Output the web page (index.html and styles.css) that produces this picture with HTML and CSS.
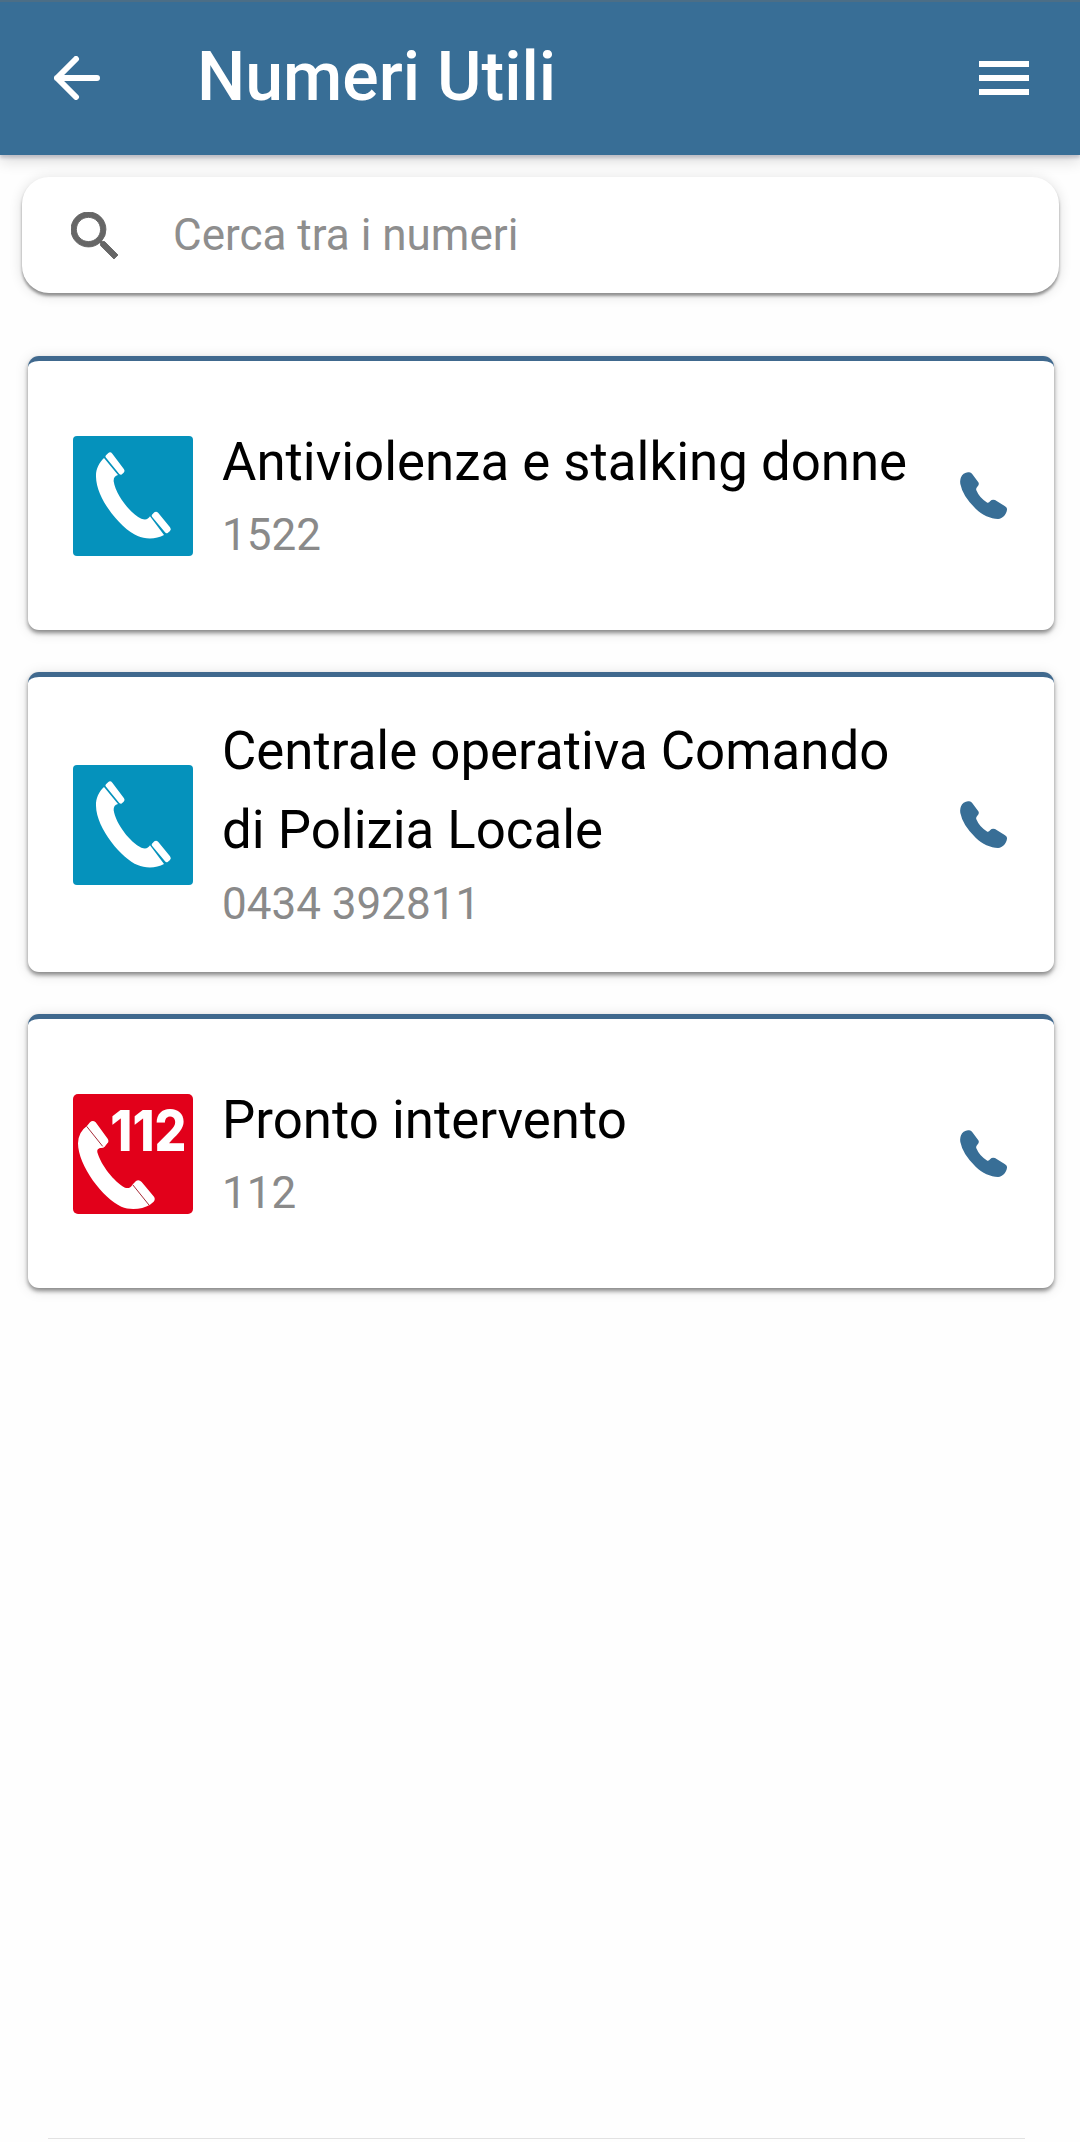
FILE: index.html
```html
<!DOCTYPE html>
<html lang="it">
<head>
<meta charset="utf-8">
<title>Numeri Utili</title>
<link rel="stylesheet" href="styles.css">
</head>
<body>
<header class="toolbar">
  <svg class="back" viewBox="0 0 46 44"><path d="M43 22H3M22 3L3 22l19 19"/></svg>
  <h1 class="title">Numeri Utili</h1>
  <div class="menu"><span></span><span></span><span></span></div>
</header>
<main class="content">
  <div class="search">
    <svg class="search-icon" viewBox="3 3 17.5 17.5"><path d="M15.5 14h-.79l-.28-.27A6.47 6.47 0 0 0 16 9.5 6.5 6.5 0 1 0 9.5 16c1.61 0 3.09-.59 4.23-1.57l.27.28v.79l5 4.99L20.49 19l-4.99-5zm-6 0C7.01 14 5 11.99 5 9.5S7.01 5 9.5 5 14 7.01 14 9.5 11.99 14 9.5 14z"/></svg>
    <span class="placeholder">Cerca tra i numeri</span>
  </div>
  <section class="cards">
    <article class="card">
      <svg class="badge" viewBox="39 48 360 360"><rect class="teal" x="39" y="48" width="360" height="360" rx="12"/><g class="white"><path d="M132 114L174 165Q160 168 161 184C167 225 212 282 244 296Q262 303 270 289L312 345C290 358 255 358 233 348C187 330 109 239 108 170C107 148 117 128 132 114Z"/><path d="M138 106L145 99Q151 94 157 101L192 148Q196 153 191 158L184 164Q179 165 176 160L137 112Q135 109 138 106Z"/><path d="M276 284L283 277Q289 273 295 279L330 322Q335 328 330 333L323 339Q318 341 315 337L276 290Q274 287 276 284Z"/></g></svg>
      <div class="info"><h2>Antiviolenza e stalking donne</h2><p>1522</p></div>
      <svg class="call" viewBox="90 68 141 141"><path d="M101 73Q108 70 114 69Q122 67 126 73L145 99Q149 106 142 112Q137 117 139 123Q149 147 172 160Q176 162 181 155Q186 149 195 152L224 170Q232 175 231 181C229 195 219 207 204 209C182 208 156 197 137 178Q98 141 91 104Q88 84 101 73Z"/></svg>
    </article>
    <article class="card tall">
      <svg class="badge" viewBox="39 48 360 360"><rect class="teal" x="39" y="48" width="360" height="360" rx="12"/><g class="white"><path d="M132 114L174 165Q160 168 161 184C167 225 212 282 244 296Q262 303 270 289L312 345C290 358 255 358 233 348C187 330 109 239 108 170C107 148 117 128 132 114Z"/><path d="M138 106L145 99Q151 94 157 101L192 148Q196 153 191 158L184 164Q179 165 176 160L137 112Q135 109 138 106Z"/><path d="M276 284L283 277Q289 273 295 279L330 322Q335 328 330 333L323 339Q318 341 315 337L276 290Q274 287 276 284Z"/></g></svg>
      <div class="info"><h2>Centrale operativa Comando<br>di Polizia Locale</h2><p>0434 392811</p></div>
      <svg class="call" viewBox="90 68 141 141"><path d="M101 73Q108 70 114 69Q122 67 126 73L145 99Q149 106 142 112Q137 117 139 123Q149 147 172 160Q176 162 181 155Q186 149 195 152L224 170Q232 175 231 181C229 195 219 207 204 209C182 208 156 197 137 178Q98 141 91 104Q88 84 101 73Z"/></svg>
    </article>
    <article class="card">
      <svg class="badge" viewBox="39 42 360 360"><rect class="red" x="39" y="42" width="360" height="360" rx="15"/><path class="white" d="M80 139L90 127Q98 119 107 127L143 176Q148 184 142 190L134 200Q130 205 120 204Q110 207 112 217C122 254 162 306 195 323Q210 328 217 314L228 303Q237 298 245 306L282 350Q287 358 281 365L270 374C247 388 210 391 184 380C130 357 54 257 54 190Q55 156 80 139Z"/><path class="seam" d="M80 139L128 199M218 314L267 375"/><text class="digits" x="151" y="214" textLength="228" lengthAdjust="spacingAndGlyphs">112</text></svg>
      <div class="info"><h2>Pronto intervento</h2><p>112</p></div>
      <svg class="call" viewBox="90 68 141 141"><path d="M101 73Q108 70 114 69Q122 67 126 73L145 99Q149 106 142 112Q137 117 139 123Q149 147 172 160Q176 162 181 155Q186 149 195 152L224 170Q232 175 231 181C229 195 219 207 204 209C182 208 156 197 137 178Q98 141 91 104Q88 84 101 73Z"/></svg>
    </article>
  </section>
</main>
<hr class="bottom-line">
</body>
</html>
```

FILE: styles.css
```css
* { box-sizing: border-box; }
body {
  margin: 0;
  height: 2142px;
  display: flex;
  flex-direction: column;
  background: #fefefe;
  font-family: Roboto, sans-serif;
  overflow: hidden;
}
h1, h2, p { margin: 0; font-weight: 400; }
svg { display: block; flex: none; }
.toolbar {
  height: 155px;
  flex: none;
  display: flex;
  align-items: center;
  padding: 0 51px 1px 54px;
  background: #386e96;
  border-top: 2px solid #4c6e86;
  box-shadow: 0 3px 3px rgba(60, 60, 90, .22), 0 6px 14px rgba(0, 0, 0, .14);
}
.back { width: 46px; height: 44px; fill: none; stroke: #fff; stroke-width: 6; stroke-linecap: round; stroke-linejoin: round; }
.title {
  flex: 1;
  margin-left: 97px;
  padding-bottom: 3px;
  color: #fff;
  font-size: 68px;
  font-weight: 500;
  line-height: 78px;
  white-space: nowrap;
}
.menu { width: 50px; display: grid; gap: 8px; }
.menu span { height: 6px; background: #fff; }
.content { flex: 1; padding: 22px 21px 0 22px; }
.search {
  height: 116px;
  display: flex;
  align-items: center;
  padding-left: 49px;
  border-radius: 27px;
  background: #fff;
  box-shadow: 0 3px 3px rgba(0, 0, 0, .38), 0 2px 13px rgba(0, 0, 0, .14);
}
.search-icon { width: 47px; height: 47px; fill: #666; stroke: #666; stroke-width: .35; }
.placeholder { margin-left: 55px; font-size: 44px; line-height: 60px; color: #8e8e8e; }
.cards { display: grid; gap: 42px; padding: 63px 5px 0 6px; }
.card {
  height: 274px;
  display: flex;
  align-items: center;
  padding: 0 47px 0 45px;
  border-top: 5px solid #40698e;
  border-radius: 11px;
  background: #fff;
  box-shadow: 0 3px 4px rgba(0, 0, 0, .42), 0 2px 14px rgba(0, 0, 0, .13);
}
.tall { height: 300px; }
.badge { width: 120px; height: 120px; }
.teal { fill: #0592bc; }
.red { fill: #e2001a; }
.white { fill: #fff; }
.seam { fill: none; stroke: #a62b38; stroke-width: 3; }
.digits { font: 800 168px Inter, sans-serif; fill: #fff; }
.info { flex: 1; margin-left: 29px; white-space: nowrap; }
.info h2 { font-size: 52.8px; line-height: 79px; color: #000; }
.info p { font-size: 44px; line-height: 66px; color: #8a8a8a; }
.tall h2 { padding-bottom: 1px; }
.call { width: 47px; height: 47px; fill: #386e96; }
.bottom-line { width: 977px; height: 1px; margin: 0 0 3px 48px; border: 0; background: #e2e2e2; }
```
